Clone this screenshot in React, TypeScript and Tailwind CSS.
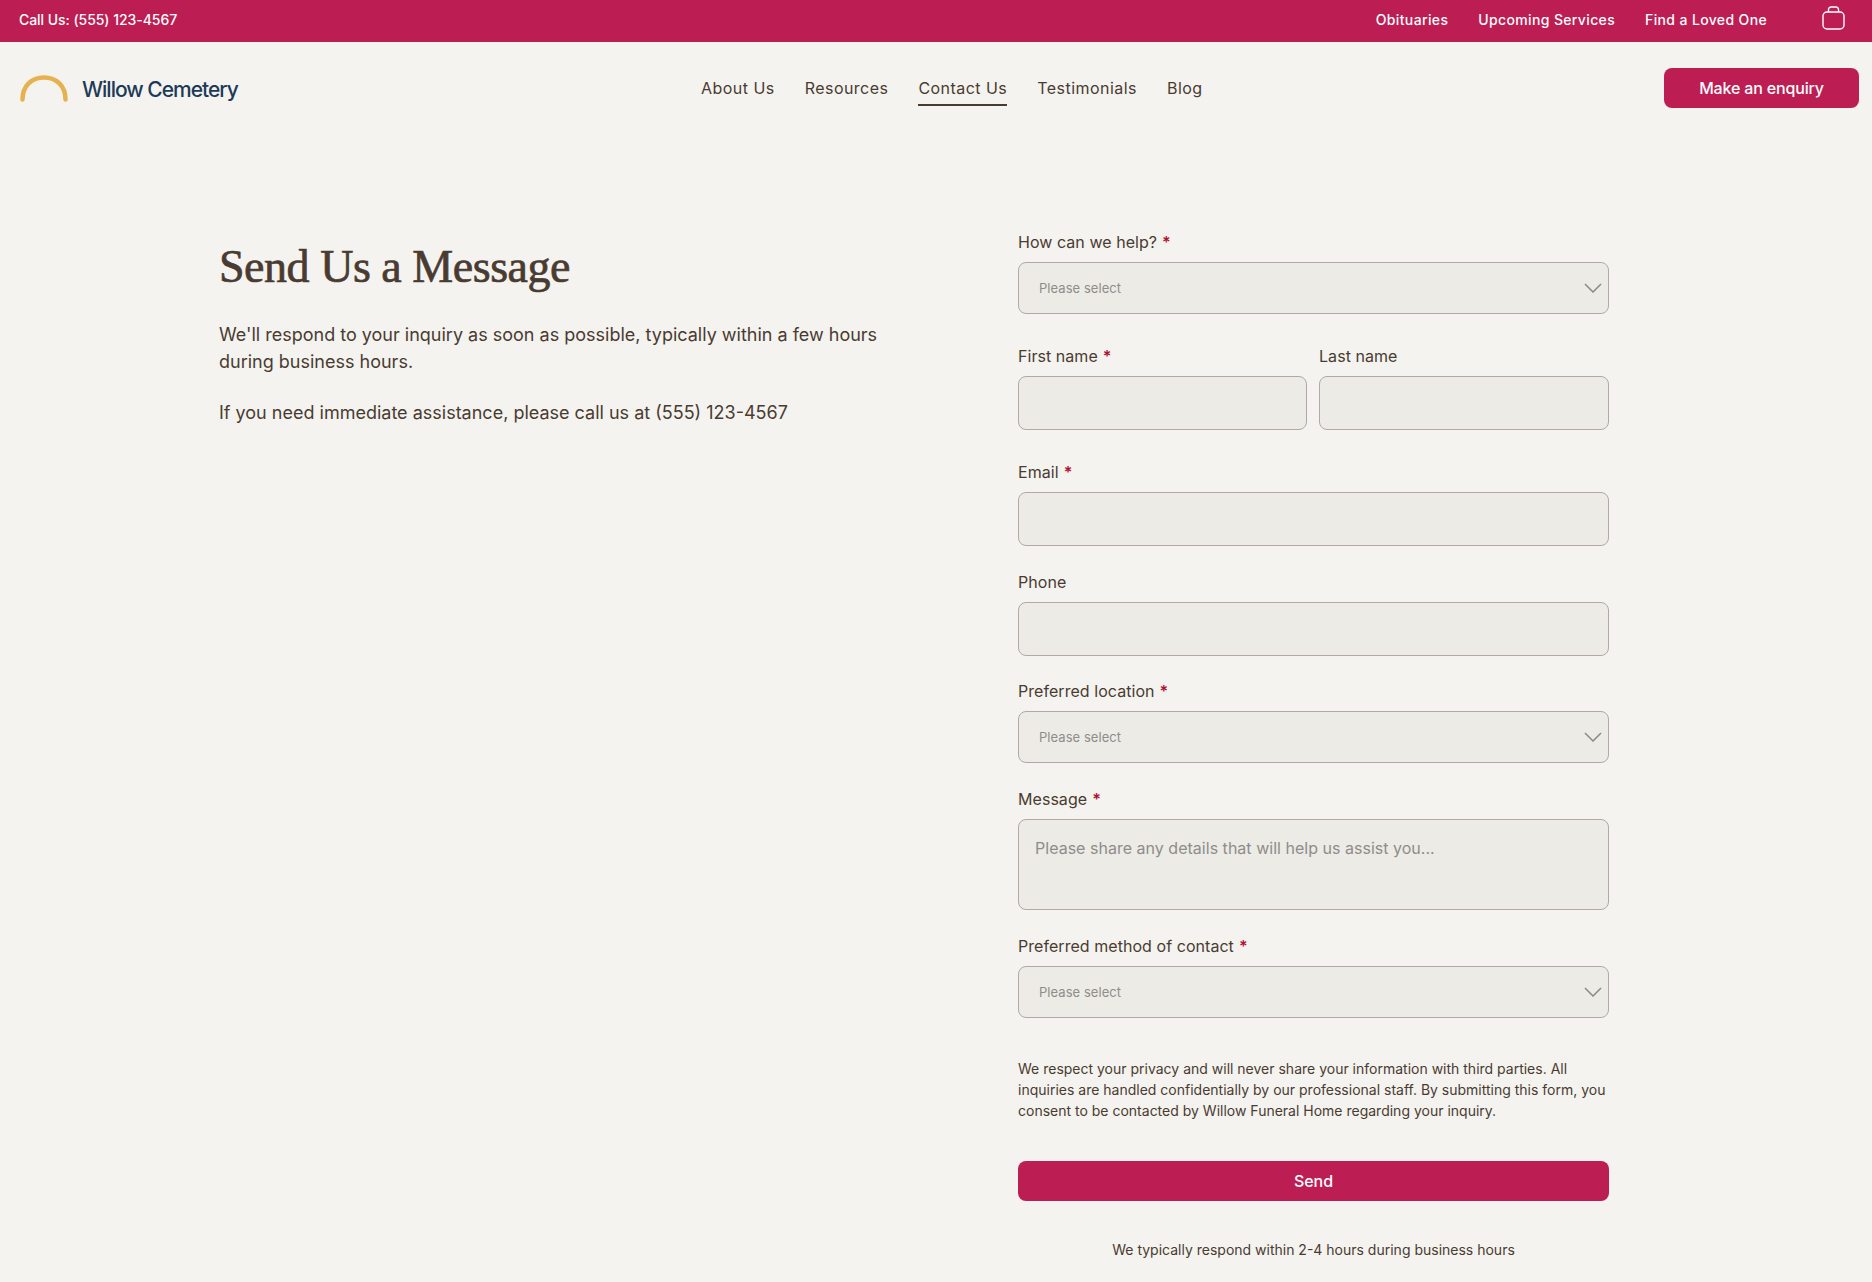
import React from "react";

const inter = "font-['Inter',sans-serif]";

function Label({ text, required, mb = "mb-[10px]" }: { text: string; required?: boolean; mb?: string }) {
  return (
    <label className={`block text-[16px] leading-[20px] tracking-[0.05px] text-[#4a3b32] ${mb}`}>
      {text}
      {required && <span className="ml-[5px] font-semibold text-[#b0112f]">*</span>}
    </label>
  );
}

function SelectBox() {
  return (
    <div className="flex h-[52px] items-center justify-between rounded-[8px] border border-[#aeaba6] bg-[#ecebe6] pl-[20px] pr-[6px]">
      <span className="pt-[2px] text-[13px] tracking-[0.05px] text-[#8f8d8a]">Please select</span>
      <svg width="18" height="10" viewBox="0 0 18 10" fill="none" stroke="#8b8985" strokeWidth="1.5">
        <path d="M1 1l8 8 8-8" />
      </svg>
    </div>
  );
}

function InputBox() {
  return <div className="h-[54px] rounded-[8px] border border-[#aeaba6] bg-[#ecebe6]" />;
}

export default function App() {
  return (
    <div className={`min-h-[1282px] overflow-hidden bg-[#f4f3ef] ${inter} text-[#4a3b32]`}>
      <div className="flex h-[42px] items-center justify-between bg-[#bc1e54] pl-[19px] pr-[27px] text-white">
        <span className="pb-[3px] text-[14px] font-medium tracking-[-0.05px]">Call Us: (555) 123-4567</span>
        <div className="flex items-center text-[14px] font-medium tracking-[0.36px]">
          <span className="mr-[30px] pb-[3px]">Obituaries</span>
          <span className="mr-[30px] pb-[3px]">Upcoming Services</span>
          <span className="mr-[55px] pb-[3px]">Find a Loved One</span>
          <svg width="23" height="24" viewBox="0 0 23 24" fill="none" stroke="white" strokeWidth="1.4" className="mb-[7px]">
            <rect x="1" y="6" width="21" height="17" rx="4" />
            <path d="M6.5 6V3.5A2.5 2.5 0 0 1 9 1h5a2.5 2.5 0 0 1 2.5 2.5V6" />
          </svg>
        </div>
      </div>

      <header className="relative flex h-[92px] items-center justify-between pl-[20px] pr-[13px]">
        <div className="flex items-center pt-[4px]">
          <svg width="48" height="27" viewBox="0 0 48 27" fill="none" className="mt-[-4px]">
            <path d="M2.5 24.5C2.5 11 11.5 2.5 24 2.5S45.5 11 45.5 24.5" stroke="#e6b24f" strokeWidth="4.5" strokeLinecap="round" />
          </svg>
          <span className="ml-[14px] text-[21px] font-medium tracking-[-1px] text-[#1d3a58]">Willow Cemetery</span>
        </div>
        <nav className="absolute left-[701px] top-[35px] flex gap-[30px] text-[16px] tracking-[0.46px]">
          <a className="pb-[5px] leading-[22px]">About Us</a>
          <a className="pb-[5px] leading-[22px]">Resources</a>
          <a className="border-b-2 border-[#4a3b32] pb-[5px] leading-[22px]">Contact Us</a>
          <a className="pb-[5px] leading-[22px]">Testimonials</a>
          <a className="pb-[5px] leading-[22px]">Blog</a>
        </nav>
        <button className="h-[40px] w-[195px] rounded-[8px] bg-[#bc1e54] text-[16px] font-medium tracking-[-0.16px] text-white">
          Make an enquiry
        </button>
      </header>

      <main className="flex pl-[219px] pt-[98px]">
        <section className="w-[799px] pt-[5px]">
          <h1 className="font-['Liberation_Serif',serif] text-[46px] font-normal leading-[60px] tracking-[-0.47px] text-[#4a3b32] [-webkit-text-stroke:0.7px_#4a3b32]">
            Send Us a Message
          </h1>
          <p className="mt-[24px] w-[680px] text-[18px] leading-[27px]">
            We'll respond to your inquiry as soon as possible, typically within a few hours during business hours.
          </p>
          <p className="mt-[24px] text-[18px] leading-[27px]">
            If you need immediate assistance, please call us at (555) 123-4567
          </p>
        </section>

        <form className="w-[591px]">
          <Label text="How can we help?" required />
          <SelectBox />
          <div className="mt-[32px] grid grid-cols-[289px_290px] gap-[12px]">
            <div>
              <Label text="First name" required />
              <InputBox />
            </div>
            <div>
              <Label text="Last name" />
              <InputBox />
            </div>
          </div>
          <div className="mt-[32px]">
            <Label text="Email" required />
            <InputBox />
          </div>
          <div className="mt-[26px]">
            <Label text="Phone" />
            <InputBox />
          </div>
          <div className="mt-[25px]">
            <Label text="Preferred location" required />
            <SelectBox />
          </div>
          <div className="mt-[26px]">
            <Label text="Message" required />
            <div className="h-[91px] rounded-[8px] border border-[#aeaba6] bg-[#ecebe6] px-[16px] pt-[18px] text-[16px] leading-[20px] tracking-[0.02px] text-[#8f8d8a]">
              Please share any details that will help us assist you...
            </div>
          </div>
          <div className="mt-[26px]">
            <Label text="Preferred method of contact" required />
            <SelectBox />
          </div>
          <p className="mt-[40px] text-[14px] leading-[21px]">
            We respect your privacy and will never share your information with third parties. All inquiries are handled confidentially by our professional staff. By submitting this form, you consent to be contacted by Willow Funeral Home regarding your inquiry.
          </p>
          <button type="button" className="mt-[40px] block h-[40px] w-full rounded-[8px] bg-[#bc1e54] text-[16px] font-medium text-white">
            Send
          </button>
          <p className="mt-[39px] text-center text-[14px] leading-[20px]">
            We typically respond within 2-4 hours during business hours
          </p>
        </form>
      </main>
    </div>
  );
}
